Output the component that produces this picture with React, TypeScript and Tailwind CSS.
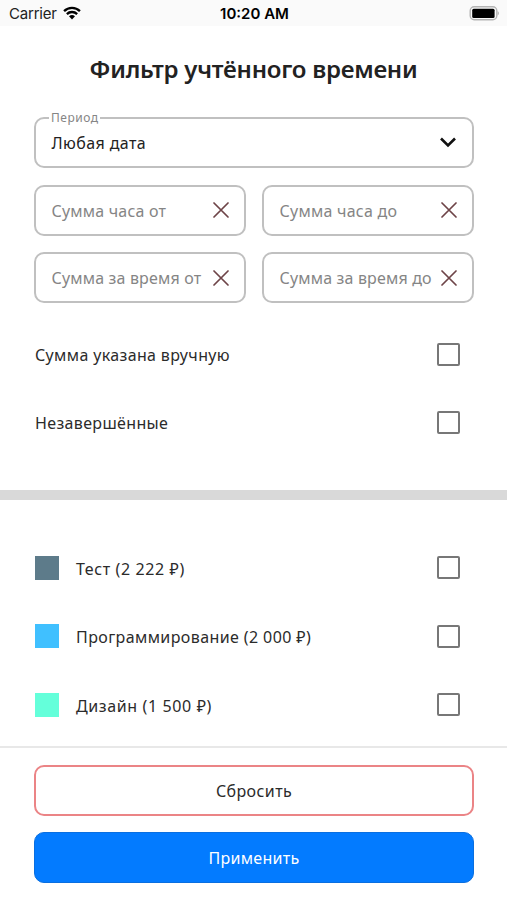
import React, { useState } from 'react';

const categories = [
  { id: 1, name: 'Тест (2 222 ₽)', color: 'bg-[#5d7b8a]', tracking: 'tracking-[0.6px]' },
  { id: 2, name: 'Программирование (2 000 ₽)', color: 'bg-[#40c0ff]', tracking: 'tracking-[0.4px]' },
  { id: 3, name: 'Дизайн (1 500 ₽)', color: 'bg-[#64ffda]', tracking: 'tracking-[0.62px]' },
];

const StatusBar: React.FC = () => (
  <div className="grid h-[26px] grid-cols-3 items-center bg-[#fafafa] pl-[9px] pr-[7px] pt-[2px] font-['Inter',sans-serif] text-black">
    <div className="flex items-center gap-[6px]">
      <span className="text-[15px] leading-5 tracking-[-0.2px] text-[#222]">Carrier</span>
      <svg className="-mt-[2px]" width="18" height="14" viewBox="0 0 19 15" fill="none" stroke="#000" strokeWidth="2.5">
        <path d="M1 5.4a12.2 12.2 0 0 1 17 0" />
        <path d="M4 8.7a7.9 7.9 0 0 1 11 0" />
        <path d="M9.5 14.4 6.3 11.1a4.6 4.6 0 0 1 6.4 0z" fill="#000" stroke="none" />
      </svg>
    </div>
    <span className="text-center text-[15px] font-semibold leading-5">10:20 AM</span>
    <svg className="-mt-[2px] justify-self-end" width="31" height="15" viewBox="0 0 31 15">
      <rect x="1.2" y="0.8" width="26.6" height="13" rx="4" fill="#fafafa" stroke="#b4b4b4" strokeWidth="1.4" />
      <rect x="3.2" y="2.8" width="22.4" height="9.2" rx="1.5" fill="#000" />
      <path d="M28.6 5v4.6a2.6 2.6 0 0 0 0-4.6z" fill="#b4b4b4" />
    </svg>
  </div>
);

interface AmountFieldProps {
  placeholder: string;
  tracking: string;
}

const AmountField: React.FC<AmountFieldProps> = ({ placeholder, tracking }) => {
  const [value, setValue] = useState('');

  return (
    <div className="flex h-[51px] items-center rounded-[10px] border-2 border-[#c0c0c0] pl-[15.5px] pr-[15px]">
      <input
        type="text"
        value={value}
        onChange={(e) => setValue(e.target.value)}
        placeholder={placeholder}
        className={`w-0 flex-1 pt-px text-[16px] text-[#222] outline-none placeholder:text-[#858585] ${tracking}`}
      />
      <button onClick={() => setValue('')}>
        <svg width="16" height="16" viewBox="0 0 16 16" stroke="#6e4448" strokeWidth="1.7" strokeLinecap="round">
          <path d="M1 1l14 14M15 1L1 15" />
        </svg>
      </button>
    </div>
  );
};

interface CheckboxProps {
  checked: boolean;
  onChange: () => void;
}

const Checkbox: React.FC<CheckboxProps> = ({ checked, onChange }) => (
  <button
    role="checkbox"
    aria-checked={checked}
    onClick={onChange}
    className={`size-[23px] rounded-[2px] border-2 border-[#777] ${checked ? 'bg-[#777]' : 'bg-white'}`}
  />
);

const App: React.FC = () => {
  const [manual, setManual] = useState(false);
  const [unfinished, setUnfinished] = useState(false);
  const [selected, setSelected] = useState<number[]>([]);

  const toggleCategory = (id: number) => {
    setSelected(selected.includes(id) ? selected.filter((item) => item !== id) : [...selected, id]);
  };

  return (
    <div className="flex h-[900px] w-[507px] flex-col overflow-hidden bg-white font-['Noto_Sans',sans-serif] text-[16px] text-[#2b2b2b]">
      <StatusBar />
      <h1 className="mt-[27px] text-center text-[24px] font-semibold leading-8 text-[#222] tracking-[-0.25px]">
        Фильтр учтённого времени
      </h1>

      <div className="mt-[32px] flex flex-col gap-[16.5px] pl-[34px] pr-[33px]">
        <button className="relative flex h-[51px] items-center justify-between rounded-[10px] border-2 border-[#c0c0c0] pl-[15.5px] pr-[16px]">
          <span className="absolute -top-[9px] left-[13px] bg-white px-[2px] text-[12px] leading-4 text-[#858585] tracking-[0.5px]">
            Период
          </span>
          <span className="pt-px text-[#222] tracking-[0.4px]">Любая дата</span>
          <svg width="16" height="11" viewBox="0 0 16 11" fill="none" stroke="#111" strokeWidth="2.6">
            <path d="M1 1.5l7 7 7-7" />
          </svg>
        </button>
        <div className="grid grid-cols-2 gap-x-[16px] gap-y-[16.5px]">
          <AmountField placeholder="Сумма часа от" tracking="tracking-[0.2px]" />
          <AmountField placeholder="Сумма часа до" tracking="tracking-[0.25px]" />
          <AmountField placeholder="Сумма за время от" tracking="tracking-[0.17px]" />
          <AmountField placeholder="Сумма за время до" tracking="tracking-[0.17px]" />
        </div>
      </div>

      <div className="mt-[17px] pl-[35px] pr-[47px]">
        <div className="flex h-[68.5px] items-center justify-between">
          <span className="pt-[2px] tracking-[0.36px]">Сумма указана вручную</span>
          <Checkbox checked={manual} onChange={() => setManual(!manual)} />
        </div>
        <div className="flex h-[68.5px] items-center justify-between">
          <span className="pt-px tracking-[0.35px]">Незавершённые</span>
          <Checkbox checked={unfinished} onChange={() => setUnfinished(!unfinished)} />
        </div>
      </div>

      <div className="mt-[33px] h-[10px] shrink-0 bg-[#d9d9d9]" />

      <div className="mt-[33.5px] pl-[35px] pr-[47px]">
        {categories.map((category) => (
          <div key={category.id} className="flex h-[68.5px] items-center">
            <div className={`size-[24px] ${category.color}`} />
            <span className={`ml-[17px] flex-1 pt-[2px] ${category.tracking}`}>{category.name}</span>
            <Checkbox
              checked={selected.includes(category.id)}
              onChange={() => toggleCategory(category.id)}
            />
          </div>
        ))}
      </div>

      <div className="mt-auto flex flex-col gap-[16px] border-t-2 border-[#e8e8e8] pb-[17px] pl-[34px] pr-[33px] pt-[17px]">
        <button className="h-[51px] rounded-[10px] border-2 border-[#eb8486] pt-px tracking-[0.4px]">Сбросить</button>
        <button className="h-[51px] rounded-[10px] border border-[#0a6fe0] bg-[#037bff] pt-px text-white tracking-[0.3px]">
          Применить
        </button>
      </div>
    </div>
  );
};

export default App;
